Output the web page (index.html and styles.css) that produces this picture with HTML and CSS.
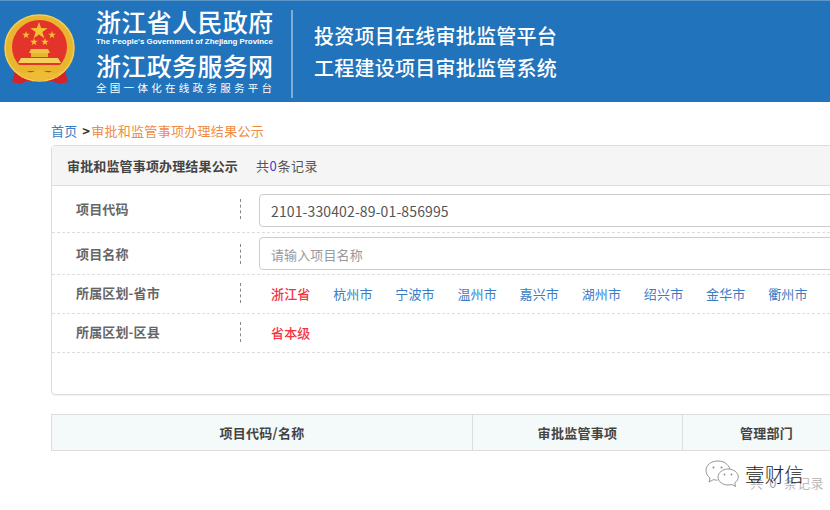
FILE: index.html
```html
<!DOCTYPE html>
<html lang="zh-CN">
<head>
<meta charset="utf-8">
<title>审批和监管事项办理结果公示</title>
<link rel="stylesheet" href="styles.css">
</head>
<body>
<header class="site-header">
  <svg class="emblem" width="80" height="90" viewBox="0 0 80 90" aria-hidden="true">
    <path d="M17 58 L12 77 L20 79 L27 76 L52 76 L60 79 L68 77 L63 58 Z" fill="#d3242a"/>
    <ellipse cx="39.500" cy="43" rx="34.500" ry="33" fill="#e9b52f"/>
    <ellipse cx="39.500" cy="43" rx="34.500" ry="33" fill="none" stroke="#f5cf55" stroke-width="1.500"/>
    <ellipse cx="39.500" cy="42" rx="27.500" ry="27" fill="#e4332a"/>
    <path d="M29 48 L31 44 L48 44 L50 48 Z" fill="#f0c542"/>
    <rect x="31" y="48" width="17" height="4" fill="#e9b52f"/>
    <path d="M18 58 L21 53 L58 53 L61 58 Z" fill="#f3d05e"/>
    <path d="M14 60 L65 60 L61 66 L18 66 Z" fill="#e9b52f"/>
    <path d="M17 65 C24 71 31 68 39.500 64 C48 68 55 71 62 65 L57 73 L48 72 L44 76 L35 76 L31 72 L22 73 Z" fill="#eebd35"/>
    <polygon points="39,17 41.100,23.100 47.600,23.200 42.400,27.100 44.300,33.300 39,29.600 33.700,33.300 35.600,27.100 30.400,23.200 36.900,23.100" fill="#f2c230"/>
    <polygon points="26,26 26.900,28.700 29.800,28.700 27.500,30.500 28.300,33.200 26,31.600 23.700,33.200 24.500,30.500 22.200,28.700 25.100,28.700" fill="#f2c230"/>
    <polygon points="52,26 52.900,28.700 55.800,28.700 53.500,30.500 54.300,33.200 52,31.600 49.700,33.200 50.500,30.500 48.200,28.700 51.100,28.700" fill="#f2c230"/>
    <polygon points="34,33 34.900,35.700 37.800,35.700 35.500,37.500 36.300,40.200 34,38.600 31.700,40.200 32.500,37.500 30.200,35.700 33.100,35.700" fill="#f2c230"/>
    <polygon points="45,33 45.900,35.700 48.800,35.700 46.500,37.500 47.300,40.200 45,38.600 42.700,40.200 43.500,37.500 41.200,35.700 44.100,35.700" fill="#f2c230"/>
  </svg>
  <div class="brand">
    <div class="brand-name">浙江省人民政府</div>
    <div class="brand-en">The People's Government of Zhejiang Province</div>
    <div class="brand-name brand-name-second">浙江政务服务网</div>
    <div class="brand-sub">全国一体化在线政务服务平台</div>
  </div>
  <div class="system">
    <div>投资项目在线审批监管平台</div>
    <div>工程建设项目审批监管系统</div>
  </div>
</header>

<main class="content">
  <nav class="crumbs"><a class="crumb-home">首页</a><span class="crumb-sep">&gt;</span><span class="crumb-current">审批和监管事项办理结果公示</span></nav>

  <section class="panel">
    <div class="panel-head">
      <strong class="panel-title">审批和监管事项办理结果公示</strong>
      <span class="panel-count">共<em>0</em>条记录</span>
    </div>
    <div class="row row-code">
      <div class="row-label">项目代码</div>
      <div class="row-value"><input class="field" type="text" value="2101-330402-89-01-856995"></div>
    </div>
    <div class="row row-name">
      <div class="row-label">项目名称</div>
      <div class="row-value"><input class="field" type="text" placeholder="请输入项目名称"></div>
    </div>
    <div class="row row-city">
      <div class="row-label">所属区划-省市</div>
      <div class="row-value links">
        <a class="on">浙江省</a><a>杭州市</a><a>宁波市</a><a>温州市</a><a>嘉兴市</a><a>湖州市</a><a>绍兴市</a><a>金华市</a><a>衢州市</a>
      </div>
    </div>
    <div class="row row-county">
      <div class="row-label">所属区划-区县</div>
      <div class="row-value links"><a class="on">省本级</a></div>
    </div>
  </section>

  <table class="results">
    <thead>
      <tr><th class="col-a">项目代码/名称</th><th class="col-b">审批监管事项</th><th class="col-c">管理部门</th></tr>
    </thead>
  </table>

  <div class="pager">共<em>0</em>条记录</div>
</main>

<aside class="watermark">
  <svg width="34" height="28" viewBox="0 0 34 28" fill="none" stroke="#8a8a8a" stroke-width="0.9" aria-hidden="true">
    <path d="M13 1 C6 1 1 5 1 10.500 C1 13.800 3 16.300 5 18 L4 22 L8.500 19.600 C9.800 20 11 20.200 12.500 20.200"/>
    <path d="M13 1 C19 1 23.500 4.300 24.800 9"/>
    <path d="M23 9 C17.500 9 13 12.800 13 17 C13 21.500 17.500 25 23 25 C24.500 25 25.500 24.800 26.800 24.400 L30.500 26.500 L29.800 22.800 C32 21.300 33.300 19.300 33.300 17 C33.300 12.800 28.800 9 23 9 Z"/>
    <circle cx="8.500" cy="7.500" r="1" fill="#8a8a8a" stroke="none"/>
    <circle cx="16.500" cy="7.500" r="1" fill="#8a8a8a" stroke="none"/>
    <circle cx="19.500" cy="14.500" r="0.900" fill="#8a8a8a" stroke="none"/>
    <circle cx="26.500" cy="14.500" r="0.900" fill="#8a8a8a" stroke="none"/>
  </svg>
  <span class="watermark-name">壹财信</span>
</aside>
</body>
</html>
```
FILE: styles.css
```css
* { box-sizing: border-box; }
html, body { margin: 0; height: 510px; overflow: hidden; background: #fff; }
body {
  font-family: "Noto Sans CJK SC", "Liberation Sans", sans-serif;
  font-size: 13px;
  letter-spacing: 0.150px;
  color: #555;
  position: relative;
}
.site-header {
  height: 102px;
  background: #2173bb;
  border-top: 1px solid #5b97c9;
  color: #fff;
  display: flex;
  align-items: flex-start;
  letter-spacing: 0;
}
.emblem { flex: none; margin-top: 4px; }
.brand { width: 211px; padding: 4px 0 0 16px; flex: none; }
.brand-name { font-size: 25px; line-height: 32px; width: 180px; font-weight: 500; letter-spacing: 0.350px; white-space: nowrap; }
.brand-name-second { margin-top: 2px; }
.brand-en { font-family: "Liberation Sans", sans-serif; font-size: 7.900px; font-weight: 700; line-height: 11px; margin-top: -1px; white-space: nowrap; }
.brand-sub { font-size: 10.500px; line-height: 15px; margin-top: -1px; letter-spacing: 3.300px; white-space: nowrap; }
.system {
  margin-top: 9px;
  height: 88px;
  border-left: 2px solid #7fadd5;
  padding: 10px 0 0 21px;
  font-size: 20px;
  line-height: 32px;
  font-weight: 500;
  letter-spacing: 0.250px;
  white-space: nowrap;
}
.content { width: 1100px; margin-left: 51px; }
.crumbs { height: 43px; padding-top: 19px; line-height: 20px; }
.crumb-home { color: #3a7cc4; }
.crumb-sep { color: #333; margin: 0 1px 0 5px; font-weight: 700; }
.crumb-current { color: #ee8b45; letter-spacing: 0.300px; }
.panel {
  height: 250px;
  border: 1px solid #ddd;
  border-radius: 4px 0 0 4px;
  box-shadow: 0 1px 1px rgba(0, 0, 0, 0.05);
}
.panel-head {
  height: 40px;
  background: #f5f5f5;
  border-bottom: 1px solid #ddd;
  display: flex;
  align-items: center;
  padding-left: 15px;
  gap: 18px;
}
.panel-title { font-weight: 700; color: #444; font-size: 13px; letter-spacing: 0.150px; }
.panel-count { letter-spacing: 0.600px; }
.panel-count em { font-style: normal; color: #3b3bd8; }
.row {
  display: flex;
  align-items: center;
  border-bottom: 1px dashed #ddd;
}
.row-code { height: 47px; padding-top: 3px; }
.row-code .row-label { margin-bottom: 3px; }
.row-name { height: 42px; }
.row-city { height: 39px; padding-bottom: 2px; }
.row-county { height: 39px; padding-bottom: 2px; }
.row-label {
  width: 189px;
  height: 20px;
  line-height: 20px;
  padding-left: 24px;
  font-weight: 700;
  color: #666;
  border-right: 1px dashed #888;
  flex: none;
}
.row-value { padding-left: 18px; flex: 1; }
.field {
  display: block;
  width: 100%;
  height: 33px;
  border: 1px solid #ccc;
  border-radius: 4px;
  padding: 0 11px;
  font: 14px "Noto Sans CJK SC", "Liberation Sans", sans-serif;
  letter-spacing: 0.120px;
  color: #555;
}
.field::placeholder { color: #999; font-size: 13px; }
.links { display: flex; gap: 22.700px; padding-left: 30px; }
.links a { color: #3a7cc4; white-space: nowrap; }
.links a.on { color: #f5333f; font-weight: 500; }
.results {
  margin-top: 19px;
  border-collapse: collapse;
  table-layout: fixed;
  width: 800px;
}
.results th {
  height: 36px;
  padding: 0;
  background: #f4f9f9;
  border: 1px solid #ddd;
  font-size: 13px;
  letter-spacing: 0.300px;
  font-weight: 700;
  color: #444;
}
.col-a { width: 421px; }
.col-b { width: 210px; }
.pager { margin: 22px 0 0 699px; line-height: 20px; color: #bbb; letter-spacing: 0.300px; white-space: nowrap; }
.pager em { font-style: normal; color: #9ab; margin: 0 7px 0 6px; }
.watermark {
  position: absolute;
  left: 705px;
  top: 460px;
  display: flex;
  align-items: center;
  gap: 6px;
}
.watermark-name { font-size: 19.500px; font-weight: 300; color: #222; line-height: 28px; }
```
